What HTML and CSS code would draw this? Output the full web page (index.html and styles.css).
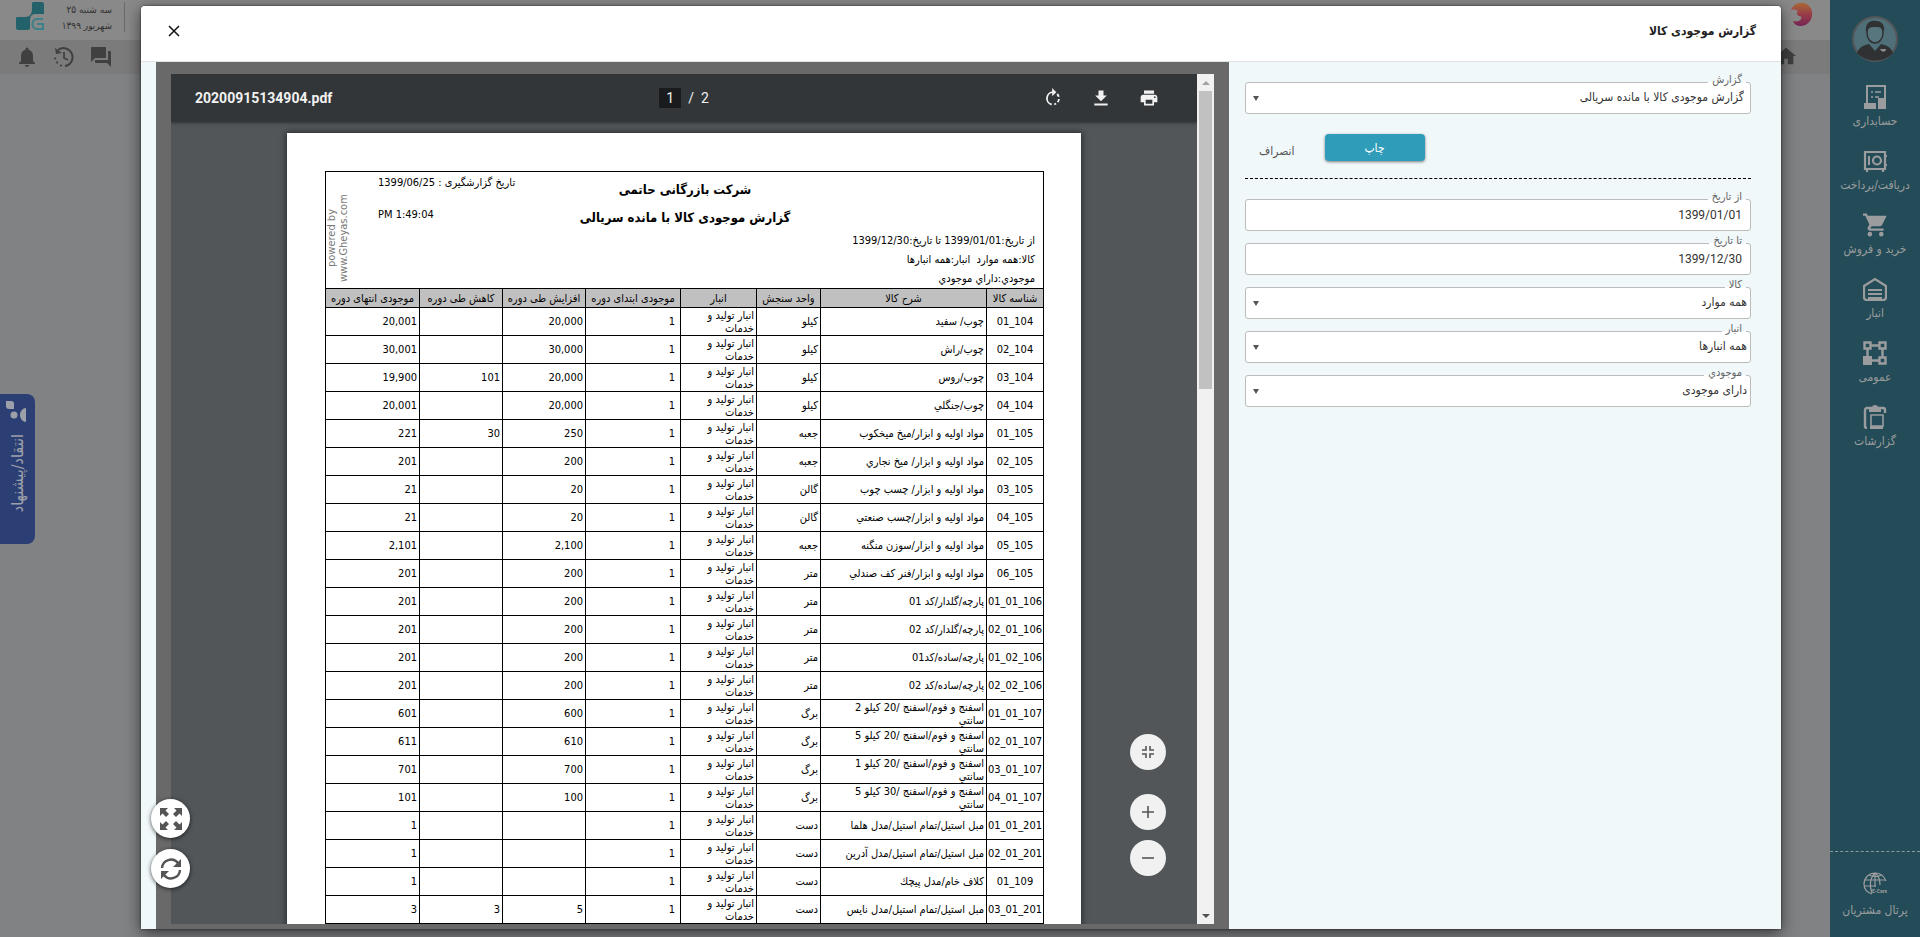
FILE: index.html
```html
<!DOCTYPE html>
<html lang="fa" dir="rtl">
<head>
<meta charset="utf-8">
<title>گزارش موجودی کالا</title>
<link rel="stylesheet" href="styles.css">
</head>
<body>
<div class="app">
  <nav class="sidebar">
    <svg class="avatar" viewBox="0 0 46 46"><circle cx="23" cy="23" r="22" fill="#4f7078" stroke="#54565a" stroke-width="2"/><path d="M5 37c2-6 7-8 12-9l6 7 6-7c5 1 10 3 12 9-9 10-27 10-36 0z" fill="#2f3133"/><ellipse cx="23" cy="17" rx="8" ry="10" fill="#58767e" stroke="#2f3133" stroke-width="1.5"/><path d="M14 16c-1-9 4-12 10-11 6 0 9 4 8 11-2-5-5-5-9-5-5 0-7 1-9 5z" fill="#2f3133"/><path d="M28 33h6c0 3-4 4-6 0z" fill="#8a8c8e"/></svg>
    <a class="nav-item" href="#"><svg viewBox="0 0 24 24"><path d="M4 18V1h18v12" fill="none" stroke="currentColor" stroke-width="2"/><path d="M8 7h2M12 7h6M8 12h2M12 12h4" stroke="currentColor" stroke-width="1.6"/><path d="M1 18h12v6H1zM15 13h8v11h-8z" fill="currentColor"/></svg><span>حسابداری</span></a>
    <a class="nav-item" href="#"><svg viewBox="0 0 24 24"><path d="M2 3h20v17H2zM4 20v3M20 20v3M22 7h2M22 16h2" fill="none" stroke="currentColor" stroke-width="2.2"/><path d="M6 7v9" stroke="currentColor" stroke-width="2"/><circle cx="14" cy="11.500" r="4" fill="none" stroke="currentColor" stroke-width="2.2"/></svg><span>دریافت/پرداخت</span></a>
    <a class="nav-item" href="#"><svg viewBox="1 2 21 20"><path fill="currentColor" d="M7 18a2 2 0 1 0 0 4 2 2 0 0 0 0-4zM1 2v2h2l3.600 7.600-1.400 2.400C4.500 15.400 5.500 17 7 17h12v-2H7.400l1.100-2h7.500c.7 0 1.400-.4 1.700-1L21.700 4H5.200l-.9-2H1zm16 16a2 2 0 1 0 0 4 2 2 0 0 0 0-4z"/></svg><span>خرید و فروش</span></a>
    <a class="nav-item" href="#"><svg viewBox="0 0 24 24"><path d="M4 23c-2 0-3-1-3-3V9l11-7 11 7v11c0 2-1 3-3 3z" fill="none" stroke="currentColor" stroke-width="2.200"/><path d="M5 13h14M5 17h14M5 21h14" stroke="currentColor" stroke-width="2"/></svg><span>انبار</span></a>
    <a class="nav-item" href="#"><svg viewBox="0 0 24 24"><path d="M1.500 1.500h6v6h-6zM16.500 1.500h6v6h-6zM16.500 16.500h6v6h-6zM8 4.500h8M4.500 8v8M19.500 8v8M8 19.500h8" fill="none" stroke="currentColor" stroke-width="2.400"/><path d="M0 15h9v9H0z" fill="currentColor"/></svg><span>عمومی</span></a>
    <a class="nav-item" href="#"><svg viewBox="0 0 24 24"><path d="M4 23c-2 0-2-1-2-2V5c0-1 1-2 2-2h16c1 0 2 1 2 2v3" fill="none" stroke="currentColor" stroke-width="2.400"/><path d="M6 3h3a3 3 0 0 1 6 0h3v4H6zM7 21h13v3H7z" fill="currentColor"/><path d="M8 10h12v11H8z" fill="none" stroke="currentColor" stroke-width="1.600"/></svg><span>گزارشات</span></a>
    <a class="nav-item portal" href="#"><svg viewBox="0 0 24 24"><g fill="none" stroke="currentColor" stroke-width="1.200"><path d="M9 22C3 20 1 16 1 12 1 6 6 1 12 1c5 0 9 3 11 8M12 1c-5 5-6 13-3 20M12 1c4 3 5 7 5 12M12 1v14M2 8h20M1 14h12M6 3c4 2 9 2 12 0"/></g><text x="9" y="21" font-size="5" font-family="Roboto" font-weight="700" fill="currentColor" direction="ltr" text-anchor="start">E-Care</text></svg><span>پرتال مشتریان</span></a>
  </nav>
  <div class="main">
    <header class="topbar">
      <svg class="swirl" viewBox="0 0 24 26"><defs><linearGradient id="sw" x1="0" y1="0" x2="0" y2="1"><stop offset="0" stop-color="#a86a35"/><stop offset=".5" stop-color="#993c48"/><stop offset="1" stop-color="#742556"/></linearGradient></defs><path fill="url(#sw)" d="M1 8C3 3 8 0 13 1c7 1 10 7 9 13-1 6-6 10-11 10-4 0-7-2-8-5 4 1 7 0 8-2s0-3-2-3c-2-1-3-3-1-5-2-1-4-2-7-1z"/></svg>
      <div class="today">
        <span class="divider"></span>
        <p>سه شنبه ۲۵<br>شهریور ۱۳۹۹</p>
        <svg class="logo" viewBox="0 0 28 28"><path fill="#23616b" d="M17 0h9c1 0 2 1 2 2v10h-8c-4 0-6 2-6 6v8c0 1-1 2-2 2H2c-1 0-2-1-2-2V16c0-1 1-1 2-1h7c5 0 7-3 7-8V1z"/><path d="M27 17h-6c-6 0-6 10 0 10h6v-5h-6" fill="none" stroke="#3c8089" stroke-width="2"/></svg>
      </div>
    </header>
    <div class="toolbar">
      <svg class="home" viewBox="0 0 24 24"><path fill="currentColor" d="M10 20v-6h4v6h6v-9h3L12 2 1 11h3v9z"/></svg>
      <div class="tools">
        <svg viewBox="2 2 20 20"><path fill="currentColor" d="M21 6h-2v9H6v2c0 .6.400 1 1 1h11l4 4V7c0-.6-.4-1-1-1zm-4 6V3c0-.6-.4-1-1-1H3c-.6 0-1 .4-1 1v14l4-4h10c.6 0 1-.4 1-1z"/></svg>
        <svg viewBox="2 2 20 20"><path d="M6 5a9 9 0 1 1 7 16" fill="none" stroke="currentColor" stroke-width="2"/><path d="M3 3l1 6 6-1z" fill="currentColor"/><path d="M12 7v6l4 2" fill="none" stroke="currentColor" stroke-width="1.800"/><path d="M9 20.500h.1M5 17.500h.1M3 13.500h.1" stroke="currentColor" stroke-width="2.200" stroke-linecap="round"/></svg>
        <svg viewBox="3 2 18 20"><path fill="currentColor" d="M12 22c1.100 0 2-.9 2-2h-4c0 1.100.9 2 2 2zm6-6v-5c0-3.100-1.600-5.600-4.500-6.300V4a1.500 1.500 0 0 0-3 0v.7C7.600 5.400 6 7.900 6 11v5l-2 2v1h16v-1z"/></svg>
      </div>
    </div>
  </div>
  <button class="feedback" type="button">
    <svg viewBox="0 0 22 22"><path fill="currentColor" d="M2 1h5c2 0 3 1 3 2v6H5C3 9 2 8 2 6z"/><circle cx="10" cy="15" r="3.500" fill="currentColor"/><path fill="currentColor" d="M22 8v14c-8-1-8-13 0-14z"/></svg>
    <span>انتقاد/پیشنهاد</span>
  </button>
</div>

<section class="modal" role="dialog" aria-labelledby="dlg-title">
  <header class="modal-head">
    <h1 id="dlg-title">گزارش موجودی کالا</h1>
    <button class="close" type="button" aria-label="بستن"><svg viewBox="0 0 12 12"><path d="M1 1l10 10M11 1L1 11" stroke="#111" stroke-width="1.500"/></svg></button>
  </header>
  <div class="modal-body">
    <form class="filters">
      <div class="field pick first"><label for="f1">گزارش</label><select id="f1"><option>گزارش موجودی کالا با مانده سریالی</option></select></div>
      <div class="actions"><button class="print" type="button">چاپ</button><button class="cancel" type="button">انصراف</button></div>
      <div class="field date"><label for="f2">از تاریخ</label><input id="f2" type="text" value="1399/01/01"></div>
      <div class="field date"><label for="f3">تا تاریخ</label><input id="f3" type="text" value="1399/12/30"></div>
      <div class="field pick"><label for="f4">کالا</label><select id="f4"><option>همه موارد</option></select></div>
      <div class="field pick"><label for="f5">انبار</label><select id="f5"><option>همه انبارها</option></select></div>
      <div class="field pick"><label for="f6">موجودي</label><select id="f6"><option>دارای موجودی</option></select></div>
    </form>
    <div class="preview">
      <div class="viewer" dir="ltr">
        <div class="pdf">
          <div class="pdf-bar">
            <strong>20200915134904.pdf</strong>
            <div class="pager"><input type="text" value="1" aria-label="صفحه"><span>/</span><span>2</span></div>
            <div class="pdf-tools">
              <button type="button" aria-label="چرخش"><svg viewBox="0 0 24 24"><path d="M12 5a7.500 7.500 0 0 0-1.500 14.800" fill="none" stroke="currentColor" stroke-width="2.200"/><path d="M11 0l5 5-5 5z" fill="currentColor"/><path d="M17 7.200a7.500 7.500 0 0 1-3.500 12.500" fill="none" stroke="currentColor" stroke-width="2.200" stroke-dasharray="4 2.500"/></svg></button>
              <button type="button" aria-label="دانلود"><svg viewBox="0 0 24 24"><path fill="currentColor" d="M19 9h-4V3H9v6H5l7 7zM4 18.500V21h16v-2.500z"/></svg></button>
              <button type="button" aria-label="چاپ"><svg viewBox="0 0 24 24"><path fill="currentColor" d="M19 8H5c-1.700 0-3 1.300-3 3v6h4v4h12v-4h4v-6c0-1.700-1.300-3-3-3zm-3 11H8v-5h8zm3-7a1 1 0 1 1 0-2 1 1 0 0 1 0 2zM18 3H6v4h12z"/></svg></button>
            </div>
          </div>
          <div class="pdf-area">
            <article class="page" dir="rtl">
              <div class="report-head">
                <div class="criteria"><p>از تاریخ:1399/01/01 تا تاریخ:1399/12/30</p><p>کالا:همه موارد&nbsp; انبار:همه انبارها</p><p>موجودي:داراي موجودي</p></div>
                <div class="titles"><h2>شرکت بازرگانی حاتمی</h2><h2>گزارش موجودی کالا با مانده سریالی</h2></div>
                <div class="meta"><p>تاریخ گزارشگیری : 1399/06/25</p><p dir="ltr">PM 1:49:04</p></div>
                <div class="brand" dir="ltr">powered by<br>www.Gheyas.com</div>
              </div>
              <table>
                <colgroup><col class="c-id"><col class="c-desc"><col class="c-unit"><col class="c-store"><col class="c-open"><col class="c-num"><col class="c-num"><col class="c-end"></colgroup>
                <thead><tr><th>شناسه کالا</th><th>شرح کالا</th><th>واحد سنجش</th><th>انبار</th><th>موجودی ابتدای دوره</th><th>افزایش طی دوره</th><th>کاهش طی دوره</th><th>موجودی انتهای دوره</th></tr></thead>
                <tbody>
                <tr><td>01_104</td><td>چوب/ سفید</td><td>کیلو</td><td>انبار تولید و خدمات</td><td>1</td><td>20,000</td><td></td><td>20,001</td></tr>
                <tr><td>02_104</td><td>چوب/راش</td><td>کیلو</td><td>انبار تولید و خدمات</td><td>1</td><td>30,000</td><td></td><td>30,001</td></tr>
                <tr><td>03_104</td><td>چوب/روس</td><td>کیلو</td><td>انبار تولید و خدمات</td><td>1</td><td>20,000</td><td>101</td><td>19,900</td></tr>
                <tr><td>04_104</td><td>چوب/جنگلي</td><td>کیلو</td><td>انبار تولید و خدمات</td><td>1</td><td>20,000</td><td></td><td>20,001</td></tr>
                <tr><td>01_105</td><td>مواد اولیه و ابزار/میخ میخکوب</td><td>جعبه</td><td>انبار تولید و خدمات</td><td>1</td><td>250</td><td>30</td><td>221</td></tr>
                <tr><td>02_105</td><td>مواد اولیه و ابزار/ میخ نجاري</td><td>جعبه</td><td>انبار تولید و خدمات</td><td>1</td><td>200</td><td></td><td>201</td></tr>
                <tr><td>03_105</td><td>مواد اولیه و ابزار/ چسب چوب</td><td>گالن</td><td>انبار تولید و خدمات</td><td>1</td><td>20</td><td></td><td>21</td></tr>
                <tr><td>04_105</td><td>مواد اولیه و ابزار/چسب صنعتي</td><td>گالن</td><td>انبار تولید و خدمات</td><td>1</td><td>20</td><td></td><td>21</td></tr>
                <tr><td>05_105</td><td>مواد اولیه و ابزار/سوزن منگنه</td><td>جعبه</td><td>انبار تولید و خدمات</td><td>1</td><td>2,100</td><td></td><td>2,101</td></tr>
                <tr><td>06_105</td><td>مواد اولیه و ابزار/فنر کف صندلي</td><td>متر</td><td>انبار تولید و خدمات</td><td>1</td><td>200</td><td></td><td>201</td></tr>
                <tr><td>01_01_106</td><td>پارچه/گلدار/کد 01</td><td>متر</td><td>انبار تولید و خدمات</td><td>1</td><td>200</td><td></td><td>201</td></tr>
                <tr><td>02_01_106</td><td>پارچه/گلدار/کد 02</td><td>متر</td><td>انبار تولید و خدمات</td><td>1</td><td>200</td><td></td><td>201</td></tr>
                <tr><td>01_02_106</td><td>پارچه/ساده/کد01</td><td>متر</td><td>انبار تولید و خدمات</td><td>1</td><td>200</td><td></td><td>201</td></tr>
                <tr><td>02_02_106</td><td>پارچه/ساده/کد 02</td><td>متر</td><td>انبار تولید و خدمات</td><td>1</td><td>200</td><td></td><td>201</td></tr>
                <tr><td>01_01_107</td><td>اسفنج و فوم/اسفنج /20 کیلو 2<br>سانتي</td><td>برگ</td><td>انبار تولید و خدمات</td><td>1</td><td>600</td><td></td><td>601</td></tr>
                <tr><td>02_01_107</td><td>اسفنج و فوم/اسفنج /20 کیلو 5<br>سانتي</td><td>برگ</td><td>انبار تولید و خدمات</td><td>1</td><td>610</td><td></td><td>611</td></tr>
                <tr><td>03_01_107</td><td>اسفنج و فوم/اسفنج /20 کیلو 1<br>سانتي</td><td>برگ</td><td>انبار تولید و خدمات</td><td>1</td><td>700</td><td></td><td>701</td></tr>
                <tr><td>04_01_107</td><td>اسفنج و فوم/اسفنج /30 کیلو 5<br>سانتي</td><td>برگ</td><td>انبار تولید و خدمات</td><td>1</td><td>100</td><td></td><td>101</td></tr>
                <tr><td>01_01_201</td><td>مبل استیل/تمام استیل/مدل هلما</td><td>دست</td><td>انبار تولید و خدمات</td><td>1</td><td></td><td></td><td>1</td></tr>
                <tr><td>02_01_201</td><td>مبل استیل/تمام استیل/مدل آدرین</td><td>دست</td><td>انبار تولید و خدمات</td><td>1</td><td></td><td></td><td>1</td></tr>
                <tr><td>01_109</td><td>کلاف خام/مدل پیچك</td><td>دست</td><td>انبار تولید و خدمات</td><td>1</td><td></td><td></td><td>1</td></tr>
                <tr><td>03_01_201</td><td>مبل استیل/تمام استیل/مدل نایس</td><td>دست</td><td>انبار تولید و خدمات</td><td>1</td><td>5</td><td>3</td><td>3</td></tr>
                </tbody>
              </table>
            </article>
            <div class="zoomers">
              <button type="button" aria-label="اندازه"><svg viewBox="0 0 14 14"><path d="M5 1v4H1M9 1v4h4M5 13V9H1M9 13V9h4" fill="none" stroke="currentColor" stroke-width="1.600"/></svg></button>
              <button type="button" aria-label="بزرگ نمایی"><svg viewBox="0 0 14 14"><path d="M7 1v12M1 7h12" stroke="currentColor" stroke-width="1.600"/></svg></button>
              <button type="button" aria-label="کوچک نمایی"><svg viewBox="0 0 14 14"><path d="M1 7h12" stroke="currentColor" stroke-width="1.600"/></svg></button>
            </div>
          </div>
        </div>
        <div class="scroll"><svg viewBox="0 0 17 17"><path d="M5 11l4-4 4 4z" fill="#a3a3a3"/></svg><span class="thumb"></span><svg viewBox="0 0 17 17"><path d="M5 7l4 4 4-4z" fill="#505050"/></svg></div>
      </div>
      <div class="fabs">
        <button type="button" aria-label="تمام صفحه"><svg viewBox="0 0 22 22"><path fill="currentColor" d="M0 0h8L5.500 2.500 9 6 6 9 2.500 5.500 0 8zM22 0v8l-2.500-2.500L16 9l-3-3 3.500-3.500L14 0zM0 22v-8l2.500 2.500L6 13l3 3-3.500 3.500L8 22zM22 22h-8l2.500-2.500L13 16l3-3 3.500 3.500L22 14z"/></svg></button>
        <button type="button" aria-label="بارگذاری مجدد"><svg viewBox="0 0 22 22"><path d="M2 10a9 9 0 0 1 16-5M20 12a9 9 0 0 1-16 5" fill="none" stroke="currentColor" stroke-width="2.400"/><path d="M21 1v8h-8zM1 21v-8h8z" fill="currentColor"/></svg></button>
      </div>
    </div>
  </div>
</section>
</body>
</html>
```
FILE: styles.css
```css
* { box-sizing: border-box; }
body {
  margin: 0;
  height: 100vh;
  overflow: hidden;
  background: #808284;
  font: 12px "DejaVu Sans Condensed", "DejaVu Sans", sans-serif;
  color: #333;
}
p, h1, h2 { margin: 0; }
button, input, select { font: inherit; color: inherit; border: 0; padding: 0; background: none; }
svg { display: block; }

/* shell behind the dialog */
.app { display: flex; height: 100vh; position: relative; }
.main { flex: 1; }
.sidebar {
  width: 90px;
  background: #244c58;
  color: #9a9c9e;
  display: flex;
  flex-direction: column;
  align-items: center;
  padding: 16px 0;
}
.avatar { width: 46px; height: 46px; margin-bottom: 23px; }
.nav-item {
  height: 64px;
  display: flex;
  flex-direction: column;
  align-items: center;
  gap: 4px;
  color: inherit;
  text-decoration: none;
  font-size: 12px;
  line-height: 16px;
  white-space: nowrap;
}
.nav-item svg { width: 24px; height: 24px; }
.portal {
  margin-top: auto;
  width: 100%;
  height: 70px;
  padding-top: 20px;
  border-top: 1px dashed #8a9a9e;
  gap: 6px;
}
.topbar {
  height: 40px;
  background: #898989;
  display: flex;
  justify-content: space-between;
  padding: 2px 16px;
}
.swirl { width: 24px; height: 26px; }
.today { display: flex; gap: 12px; }
.today p { width: 56px; font-size: 10px; line-height: 16px; white-space: nowrap; }
.divider { width: 1px; height: 30px; background: #6b6b6b; }
.logo { width: 28px; height: 28px; }
.toolbar {
  height: 34px;
  background: #7b7b7b;
  color: #404040;
  display: flex;
  justify-content: space-between;
  align-items: center;
  padding: 0 33px 0 17px;
}
.home { width: 22px; height: 22px; }
.tools { display: flex; gap: 17px; }
.tools svg { width: 20px; height: 20px; }
.feedback {
  position: absolute;
  left: 0;
  top: 394px;
  width: 35px;
  height: 150px;
  padding: 6px 4px;
  background: #2c3f75;
  color: #9da0a8;
  border-radius: 0 8px 8px 0;
  display: flex;
  flex-direction: column;
  align-items: center;
  gap: 12px;
}
.feedback svg { width: 22px; height: 22px; align-self: flex-end; }
.feedback span { writing-mode: vertical-rl; transform: rotate(180deg); font-size: 16px; line-height: 20px; white-space: nowrap; }

/* dialog */
.modal {
  position: absolute;
  inset: 6px 139px 8px 141px;
  display: flex;
  flex-direction: column;
  background: #f0f8fa;
  border-radius: 4px 4px 0 0;
  box-shadow: 0 4px 16px rgba(0, 0, 0, .6), 0 0 2px #222;
}
.modal-head {
  height: 56px;
  flex: none;
  display: flex;
  justify-content: space-between;
  align-items: center;
  padding: 0 25px 6px 27px;
  background: #fff;
  border-bottom: 1px solid #dfe3e5;
  border-radius: 4px 4px 0 0;
}
.modal-head h1 { font-size: 12px; font-weight: 700; color: #222; }
.close { width: 12px; height: 12px; }
.modal-body { flex: 1; min-height: 0; display: flex; padding-left: 15px; }
.filters {
  width: 552px;
  padding: 20px 30px 0 16px;
  display: flex;
  flex-direction: column;
  gap: 12px;
}
.field { position: relative; height: 32px; }
.field label {
  position: absolute;
  top: -10px;
  right: 5px;
  padding: 0 4px;
  font-size: 11px;
  line-height: 16px;
  color: #666;
  background: linear-gradient(#f0f8fa 10px, #fff 10px);
}
.field select, .field input {
  width: 100%;
  height: 32px;
  background: #fff;
  border: 1px solid #bcbcbc;
  border-radius: 3px;
  font-size: 12px;
  color: #333;
  appearance: none;
  padding: 0 3px 2px;
}
.first select { padding: 0 6px 2px; }
.date input { font: 12px Roboto, sans-serif; padding: 0 8px; }
.pick::after {
  content: "";
  position: absolute;
  left: 8px;
  top: 14px;
  border: 3px solid transparent;
  border-top: 5px solid #555;
  border-bottom: 0;
}
.actions {
  height: 53px;
  display: flex;
  align-items: flex-start;
  justify-content: flex-end;
  gap: 30px;
  padding: 8px 0 0 14px;
  border-bottom: 1px dashed #000;
  margin-bottom: 8px;
}
.print {
  width: 100px;
  height: 27px;
  border-radius: 4px;
  background: #2f9cba;
  color: #fff;
  box-shadow: 0 1px 3px rgba(0, 0, 0, .5);
}
.cancel { height: 34px; color: #555; }

/* document preview */
.preview {
  position: relative;
  flex: 1;
  min-width: 0;
  background: #696969;
  padding: 12px 15px 5px;
}
.viewer { height: 100%; display: flex; overflow: hidden; }
.pdf { flex: 1; min-width: 0; display: flex; flex-direction: column; background: #525659; }
.pdf-bar {
  height: 48px;
  flex: none;
  display: grid;
  grid-template-columns: 1fr auto 1fr;
  align-items: center;
  padding: 0 24px;
  background: #323639;
  color: #f1f1f1;
  font: 14px Roboto, sans-serif;
  box-shadow: 0 1px 3px rgba(0, 0, 0, .4);
}
.pager { display: flex; align-items: center; gap: 7px; }
.pager input { width: 22px; height: 20px; background: #191b1c; text-align: center; }
.pdf-tools { display: flex; justify-content: flex-end; gap: 28px; padding-right: 14px; }
.pdf-tools svg { width: 20px; height: 20px; }
.pdf-area { position: relative; flex: 1; min-height: 0; overflow: hidden; padding-top: 11px; }
.page {
  width: 794px;
  margin: 0 auto;
  padding: 38px 37px 60px 38px;
  background: #fff;
  color: #000;
  font-size: 11px;
  box-shadow: 0 0 6px 1px rgba(0, 0, 0, .5);
}
.report-head {
  height: 117px;
  display: flex;
  border: 1px solid #000;
  border-bottom: 0;
}
.criteria { flex: 1; align-self: flex-end; padding-right: 8px; line-height: 19px; white-space: nowrap; }
.titles { width: 260px; padding-top: 4px; text-align: center; }
.titles h2 { font-size: 13px; line-height: 28px; white-space: nowrap; }
.meta {
  width: 205px;
  padding: 2px 0 0 28px;
  line-height: 18px;
  white-space: nowrap;
  display: flex;
  flex-direction: column;
  gap: 14px;
}
.meta p { text-align: left; }
.brand {
  width: 24px;
  padding-bottom: 16px;
  writing-mode: vertical-rl;
  transform: rotate(180deg);
  line-height: 12px;
  color: #777;
  text-align: center;
  white-space: nowrap;
}
table { width: 100%; table-layout: fixed; border-collapse: collapse; line-height: 13px; }
.c-id { width: 57px; }
.c-desc { width: 166px; }
.c-unit { width: 64px; }
.c-store { width: 76px; }
.c-open { width: 95px; }
.c-num { width: 83px; }
.c-end { width: 94px; }
th, td { border: 1px solid #000; padding: 0 2px; }
th { height: 19px; background: #c0c0c0; font-weight: 400; padding: 0; white-space: nowrap; }
td { height: 28px; text-align: right; }
td:first-child { direction: ltr; text-align: center; padding: 0; }
td:nth-child(4) { padding-left: 6px; }
td:nth-child(5) { padding-right: 5px; }
.zoomers {
  position: absolute;
  right: 31px;
  bottom: 48px;
  display: flex;
  flex-direction: column;
  gap: 10px;
  color: #555;
}
.zoomers button, .fabs button { display: grid; place-items: center; border-radius: 50%; }
.zoomers button { width: 36px; height: 36px; background: #f1f1f1; }
.zoomers button:first-child { margin-bottom: 14px; }
.zoomers svg { width: 14px; height: 14px; }
.scroll { width: 17px; background: #f1f1f1; display: flex; flex-direction: column; }
.scroll svg { width: 17px; height: 17px; flex: none; }
.thumb { width: 13px; height: 298px; margin: 0 2px auto; background: #c1c1c1; }
.fabs {
  position: absolute;
  left: -5px;
  bottom: 41px;
  display: flex;
  flex-direction: column;
  gap: 11px;
  color: #555;
}
.fabs button { width: 39px; height: 39px; background: #fff; box-shadow: 0 1px 4px rgba(0, 0, 0, .7); }
.fabs svg { width: 22px; height: 22px; }
```
